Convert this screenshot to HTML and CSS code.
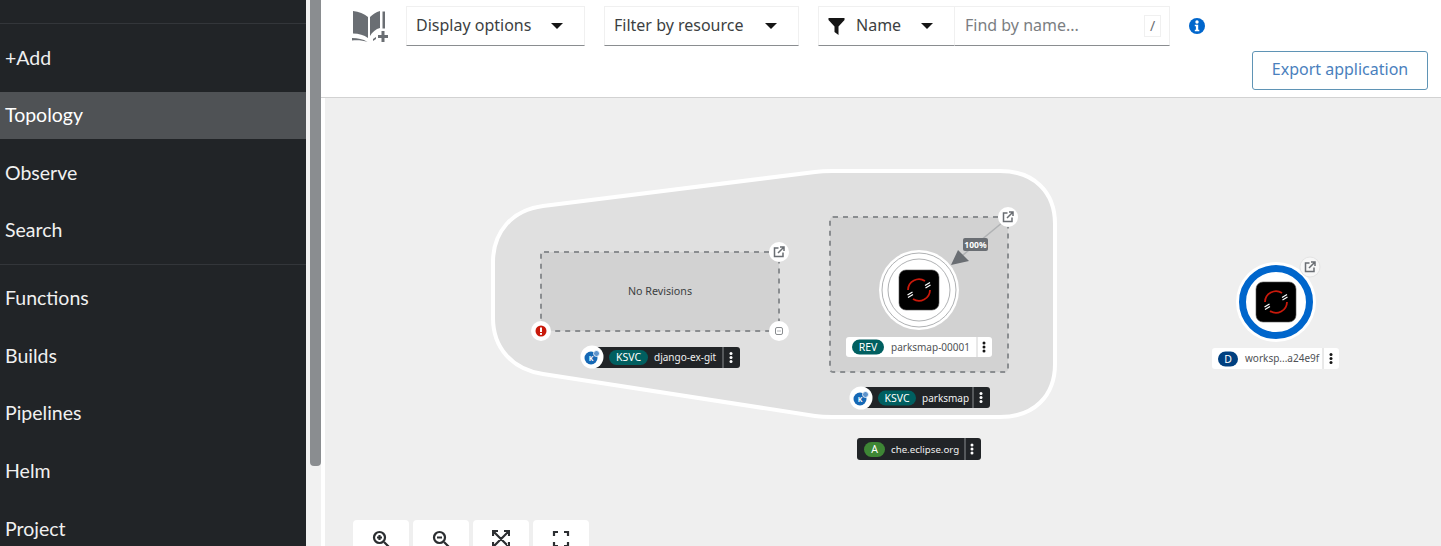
FILE: index.html
```html
<!DOCTYPE html>
<html lang="en">
<head>
<meta charset="UTF-8">
<meta name="viewport" content="width=device-width, initial-scale=1.0">
<link rel="stylesheet" href="styles.css">
<title>Topology</title>
</head>
<body>
<div class="page">
  <nav class="sidebar">
    <div class="nav-group">
      <a class="nav-item">+Add</a>
      <a class="nav-item active">Topology</a>
      <a class="nav-item">Observe</a>
      <a class="nav-item">Search</a>
    </div>
    <div class="nav-group">
      <a class="nav-item">Functions</a>
      <a class="nav-item">Builds</a>
      <a class="nav-item">Pipelines</a>
      <a class="nav-item">Helm</a>
      <a class="nav-item">Project</a>
    </div>
  </nav>
  <div class="gutter"><div class="thumb"></div></div>

  <main class="main">
    <header class="toolbar">
      <div class="toolbar-row">
        <svg class="book-icon" viewBox="0 0 36 32">
          <path d="M1 1c6 .5 11 2.500 15 6v21c-4-3-9-4.500-15-4.500z" fill="#6a6e73"/>
          <path d="M0 4v24c6 0 11 1 15.500 4-4-1.500-10-2-15.500-1.500z" fill="#6a6e73"/>
          <path d="M18 7c2.500-2.500 6-5 10-6v17c-4 1-8 4-10 8z" fill="#6a6e73"/>
          <path d="M30.500 1.500h2.500v17h-2.500z" fill="#6a6e73"/>
          <path d="M21 29l3-2v2l-3 2z" fill="#6a6e73"/>
          <path d="M29.500 21h3v4h3.500v3h-3.500v4h-3v-4H26v-3h3.500z" fill="#6a6e73"/>
        </svg>
        <button class="select select-display"><span class="select-text">Display options</span><span class="caret"></span></button>
        <button class="select select-filter"><span class="select-text">Filter by resource</span><span class="caret"></span></button>
        <div class="search-group">
          <button class="select select-name">
            <svg class="funnel" viewBox="0 0 16 17"><path d="M0 0h16v2L10 8.500V17l-4-3V8.500L0 2z" fill="#151515"/></svg>
            <span class="select-text">Name</span><span class="caret"></span>
          </button>
          <div class="search-box">
            <span class="placeholder">Find by name...</span>
            <span class="slash">/</span>
          </div>
        </div>
        <svg class="info-icon" viewBox="0 0 16 16">
          <circle cx="8" cy="8" r="8" fill="#0066cc"/>
          <circle cx="8" cy="4" r="1.700" fill="#fff"/>
          <path d="M5.800 6.800h3.400v5h1.100v1.500H5.800v-1.500h1.100V8.300H5.800z" fill="#fff"/>
        </svg>
      </div>
      <div class="toolbar-row row-end">
        <button class="export-btn">Export application</button>
      </div>
    </header>

    <section class="canvas">
      <svg class="graph" width="1116" height="448" viewBox="325 98 1116 448">
        <defs>
          <g id="ext-link">
            <path d="M-.5-4H-4.500V4.500H4V.5" fill="none" stroke="#6a6e73" stroke-width="1.500"/>
            <path d="M-1 1L4.500-4.500M1-5H5V-1" fill="none" stroke="#6a6e73" stroke-width="1.500"/>
          </g>
          <g id="kebab">
            <circle cx="0" cy="-4" r="1.500"/>
            <circle cx="0" cy="0" r="1.500"/>
            <circle cx="0" cy="4" r="1.500"/>
          </g>
          <g id="knative">
            <circle r="11.500" fill="#fff"/>
            <circle cx="-1" cy="1" r="6.500" fill="#1568b5"/>
            <circle cx="4.500" cy="-3.500" r="3" fill="#5e93cc" stroke="#fff" stroke-width=".8"/>
            <text class="k-mark" x="-1" y="3.500">K</text>
          </g>
          <g id="redhat-tile">
            <rect x="-20" y="-20" width="40" height="40" rx="7" fill="#000" stroke="#555" stroke-width=".6"/>
            <path d="M6-9A11 11 0 0 0-11 0" fill="none" stroke="#c9190b" stroke-width="1.800"/>
            <path d="M-6 9A11 11 0 0 0 11 0" fill="none" stroke="#c9190b" stroke-width="1.800"/>
            <path d="M6-4.500L11-7.500M6.500-2L11.500-5M-11.500 5L-6.500 2M-11 7.500L-6 4.500" stroke="#fff" stroke-width="1.200"/>
          </g>
        </defs>

        <path class="app-group" d="M543 206L815 172Q822 171 832 171H1000C1034 171 1055 192 1055 224V364C1055 396 1034 417 1000 417H832Q822 417 815 416L543 374C512 369 493 348 493 318V262C493 232 512 210 543 206Z"/>

        <rect class="service-box" x="541" y="252" width="238" height="79" rx="3"/>
        <text class="no-rev" x="660" y="295">No Revisions</text>
        <circle class="badge" cx="779" cy="252" r="10"/>
        <use href="#ext-link" x="779" y="252"/>
        <circle class="badge" cx="541" cy="331" r="10"/>
        <circle cx="541" cy="331" r="5.500" fill="#c9190b"/>
        <rect x="540" y="327.500" width="2" height="4.500" fill="#fff"/>
        <rect x="540" y="333" width="2" height="1.800" fill="#fff"/>
        <circle class="badge" cx="779" cy="331" r="10"/>
        <rect x="775.500" y="327.500" width="7" height="7" rx="1.500" fill="none" stroke="#8a8d90"/>
        <path d="M777 331h4" stroke="#b8bbbe"/>

        <rect class="label-dark" x="592" y="347" width="148" height="21" rx="3"/>
        <rect class="pill pill-teal" x="609" y="350" width="39" height="15" rx="7.500"/>
        <text class="pill-text" x="628.500" y="361">KSVC</text>
        <text class="label-text light" x="654" y="361">django-ex-git</text>
        <path class="divider-dark" d="M723 347v21"/>
        <use href="#kebab" x="731" y="357.500" fill="#fff"/>
        <use href="#knative" x="592" y="357"/>

        <rect class="service-box" x="830" y="217" width="178" height="155" rx="3"/>
        <path class="edge" d="M1003 222L957 260"/>
        <path class="edge-head" d="M951 265L958 250L969 261Z"/>
        <circle class="badge" cx="1008" cy="217" r="10"/>
        <use href="#ext-link" x="1008" y="217"/>
        <rect class="edge-tag" x="963" y="238" width="25" height="13" rx="2"/>
        <text class="edge-tag-text" x="975.500" y="248">100%</text>

        <circle cx="919" cy="290" r="40" fill="#fff"/>
        <circle cx="919" cy="290" r="37" fill="none" stroke="#b0b2b4"/>
        <circle cx="919" cy="290" r="31" fill="none" stroke="#b0b2b4"/>
        <use href="#redhat-tile" x="919" y="290"/>

        <rect class="label-light" x="846" y="337" width="146" height="20" rx="3"/>
        <rect class="pill pill-teal" x="852" y="339.500" width="32" height="15" rx="7.500"/>
        <text class="pill-text" x="868" y="351">REV</text>
        <text class="label-text" x="891" y="351">parksmap-00001</text>
        <path class="divider-light" d="M977 337v20"/>
        <use href="#kebab" x="984" y="347" fill="#151515"/>

        <rect class="label-dark" x="861" y="387" width="129" height="21" rx="3"/>
        <rect class="pill pill-teal" x="878" y="390.500" width="38" height="15" rx="7.500"/>
        <text class="pill-text" x="897" y="402">KSVC</text>
        <text class="label-text light" x="922" y="402">parksmap</text>
        <path class="divider-dark" d="M973 387v21"/>
        <use href="#kebab" x="981" y="397.500" fill="#fff"/>
        <use href="#knative" x="861" y="398"/>

        <rect class="label-dark" x="857" y="438" width="124" height="22" rx="3"/>
        <rect class="pill pill-green" x="864" y="442" width="21" height="15" rx="7.500"/>
        <text class="pill-text" x="874.500" y="453">A</text>
        <text class="label-text light narrow" x="891" y="453">che.eclipse.org</text>
        <path class="divider-dark" d="M965 438v22"/>
        <use href="#kebab" x="972" y="449" fill="#fff"/>

        <circle cx="1276" cy="302" r="40" fill="#fff"/>
        <circle cx="1276" cy="302" r="33.500" fill="none" stroke="#0066cc" stroke-width="7"/>
        <use href="#redhat-tile" x="1276" y="302"/>
        <circle class="badge soft" cx="1310" cy="267" r="10"/>
        <use href="#ext-link" x="1310" y="267"/>
        <rect class="label-light" x="1212" y="348" width="127" height="21" rx="3"/>
        <rect class="pill pill-navy" x="1218" y="351.500" width="20" height="15" rx="7.500"/>
        <text class="pill-text" x="1228" y="363">D</text>
        <text class="label-text" x="1245" y="362">worksp...a24e9f</text>
        <path class="divider-light" d="M1323 348v21"/>
        <use href="#kebab" x="1331" y="358.500" fill="#151515"/>
      </svg>

      <div class="zoom-controls">
        <button class="zoom-btn"><svg viewBox="0 0 18 18"><circle cx="7.500" cy="7.500" r="5.500"/><path d="M12 12l5 5M7.500 5v5M5 7.500h5"/></svg></button>
        <button class="zoom-btn"><svg viewBox="0 0 18 18"><circle cx="7.500" cy="7.500" r="5.500"/><path d="M12 12l5 5M5 7.500h5"/></svg></button>
        <button class="zoom-btn"><svg viewBox="0 0 18 18"><path d="M2 2l14 14M16 2L2 16M1 6V1h5M12 1h5v5M1 12v5h5M17 12v5h-5"/></svg></button>
        <button class="zoom-btn"><svg viewBox="0 0 18 18"><path d="M2 6V2h4M12 2h4v4M2 12v4h4M16 12v4h-4"/></svg></button>
      </div>
    </section>
  </main>
</div>
</body>
</html>
```
FILE: styles.css
```css
html, body {
  margin: 0;
  padding: 0;
  height: 100%;
  overflow: hidden;
}
body {
  font-family: "Noto Sans", Arial, sans-serif;
  background-color: #ffffff;
}
.page {
  display: flex;
  height: 546px;
  overflow: hidden;
}
.sidebar {
  flex: 0 0 306px;
  background-color: #212427;
  padding-top: 23px;
  box-sizing: border-box;
}
.nav-group {
  display: flex;
  flex-direction: column;
  gap: 10.6px;
  padding: 10.5px 0 9.5px;
  border-top: 1px solid #33363a;
}
.nav-item {
  height: 47px;
  box-sizing: border-box;
  flex: none;
  display: flex;
  align-items: center;
  padding: 0 0 2px 5px;
  color: #f0f0f0;
  font-family: Lato, Arial, sans-serif;
  font-size: 19.5px;
}
.nav-item.active {
  background-color: #4f5255;
  color: #ffffff;
}
.gutter {
  flex: 0 0 15px;
  background-color: #f1f1f1;
  padding-left: 4px;
  box-sizing: border-box;
}
.thumb {
  width: 11px;
  height: 466px;
  background-color: #8a8d90;
  border-radius: 0 0 4px 4px;
}
.main {
  flex: 1;
  display: flex;
  flex-direction: column;
  min-width: 0;
}
.toolbar {
  height: 98px;
  box-sizing: border-box;
  padding: 6px 13px 0 31px;
  border-bottom: 1px solid #d2d2d2;
  display: flex;
  flex-direction: column;
  gap: 5px;
}
.toolbar-row {
  display: flex;
  align-items: center;
  height: 40px;
  flex: none;
}
.row-end {
  justify-content: flex-end;
  align-items: flex-start;
}
.book-icon {
  width: 36px;
  height: 32px;
  margin-right: 18px;
}
.select {
  display: flex;
  align-items: center;
  height: 40px;
  box-sizing: border-box;
  padding: 0 9px;
  background-color: #ffffff;
  border: 1px solid #f0f0f0;
  border-bottom: 1px solid #8a8d90;
  font-family: "Noto Sans", Arial, sans-serif;
  font-size: 16px;
  color: #3c3f42;
  position: relative;
}
.select-text {
  padding-bottom: 3px;
}
.select-display {
  width: 179px;
  margin-right: 19px;
}
.select-filter {
  width: 195px;
  margin-right: 19px;
}
.select-name {
  width: 137px;
}
.caret {
  position: absolute;
  right: 21px;
  top: 16px;
  border-left: 6px solid transparent;
  border-right: 6px solid transparent;
  border-top: 6px solid #151515;
}
.search-group {
  display: flex;
}
.funnel {
  width: 17px;
  height: 17px;
  margin-right: 11px;
}
.search-box {
  width: 215px;
  height: 40px;
  box-sizing: border-box;
  display: flex;
  align-items: center;
  justify-content: space-between;
  padding: 0 8px 0 10px;
  border: 1px solid #f0f0f0;
  border-left: none;
  border-bottom: 1px solid #8a8d90;
  font-size: 16px;
}
.placeholder {
  color: #7b7e82;
  padding-bottom: 3px;
}
.slash {
  width: 17px;
  height: 22px;
  line-height: 20px;
  box-sizing: border-box;
  border: 1px solid #f0f0f0;
  text-align: center;
  color: #6a6e73;
  font-size: 14px;
}
.info-icon {
  width: 16px;
  height: 16px;
  margin-left: 19px;
}
.export-btn {
  width: 176px;
  height: 39px;
  background-color: #ffffff;
  border: 1px solid #5f94b5;
  border-radius: 3px;
  color: #4a7fbd;
  font-family: "Noto Sans", Arial, sans-serif;
  font-size: 16px;
  padding: 0 0 3px;
}
.canvas {
  flex: 1;
  position: relative;
  margin-left: 4px;
  background-color: #efefef;
  overflow: hidden;
}
.graph {
  position: absolute;
  left: 0;
  top: 0;
}
.app-group {
  fill: #e0e0e0;
  stroke: #ffffff;
  stroke-width: 4;
}
.service-box {
  fill: #d2d2d2;
  stroke: #8a8d90;
  stroke-width: 2;
  stroke-dasharray: 5 5;
}
.badge {
  fill: #ffffff;
}
.badge.soft {
  fill: #f7f7f7;
  stroke: #e4e4e4;
}
.no-rev {
  font-size: 10.7px;
  fill: #3c3f42;
  text-anchor: middle;
}
.label-dark {
  fill: #212427;
}
.label-light {
  fill: #ffffff;
}
.pill-teal {
  fill: #005f60;
}
.pill-green {
  fill: #3e8635;
}
.pill-navy {
  fill: #004080;
}
.pill-text {
  font-size: 10.5px;
  fill: #ffffff;
  text-anchor: middle;
}
.label-text {
  font-size: 10px;
  fill: #4f5255;
}
.label-text.light {
  fill: #f0f0f0;
}
.label-text.narrow {
  font-size: 9.7px;
}
.divider-dark {
  stroke: #8a8d90;
}
.divider-light {
  stroke: #d2d2d2;
}
.k-mark {
  font-size: 7px;
  font-weight: 700;
  fill: #ffffff;
  text-anchor: middle;
}
.edge {
  stroke: #b0b2b4;
  stroke-width: 1.5;
}
.edge-head {
  fill: #6a6e73;
}
.edge-tag {
  fill: #6a6e73;
}
.edge-tag-text {
  font-size: 8.5px;
  font-weight: 700;
  fill: #ffffff;
  text-anchor: middle;
}
.zoom-controls {
  position: absolute;
  left: 28px;
  top: 422px;
  display: flex;
  gap: 4px;
}
.zoom-btn {
  width: 56px;
  height: 56px;
  background-color: #ffffff;
  border: none;
  border-radius: 4px;
  padding: 10px 0 0 0;
  display: flex;
  justify-content: center;
  align-items: flex-start;
}
.zoom-btn svg {
  width: 18px;
  height: 18px;
  fill: none;
  stroke: #2b2e31;
  stroke-width: 2.2;
}
```
